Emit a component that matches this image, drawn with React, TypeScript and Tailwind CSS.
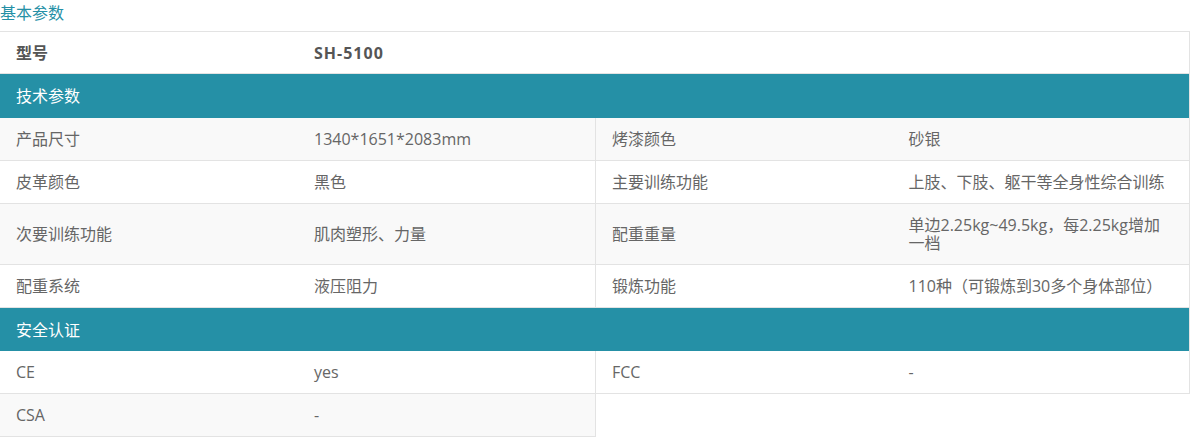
const font = { fontFamily: '"Open Sans", "Noto Sans CJK SC", sans-serif' };

type Pair = [string, React.ReactNode, string, React.ReactNode];

const tech: Pair[] = [
  ["产品尺寸", "1340*1651*2083mm", "烤漆颜色", "砂银"],
  ["皮革颜色", "黑色", "主要训练功能", "上肢、下肢、躯干等全身性综合训练"],
  [
    "次要训练功能",
    "肌肉塑形、力量",
    "配重重量",
    <>
      单边2.25kg~49.5kg，每2.25kg增加
      <br />
      一档
    </>,
  ],
  ["配重系统", "液压阻力", "锻炼功能", "110种（可锻炼到30多个身体部位）"],
];

function Section({ title, tall }: { title: string; tall?: boolean }) {
  return (
    <div className={`flex items-center bg-[#2590a6] px-4 text-white ${tall ? "h-[44px]" : "h-[43px]"}`}>
      {title}
    </div>
  );
}

function Row({ row, gray }: { row: Pair; gray: boolean }) {
  return (
    <div
      className={`grid grid-cols-[298px_298px_1fr_1fr] border-b border-[#e3e3e3] ${gray ? "bg-[#f9f9f9]" : "bg-white"}`}
    >
      <div className="flex items-center px-4 py-3">{row[0]}</div>
      <div className="flex items-center border-r border-[#e3e3e3] px-4 py-3">{row[1]}</div>
      <div className="flex items-center px-4 py-3">{row[2]}</div>
      <div className="flex items-center px-4 py-3">{row[3]}</div>
    </div>
  );
}

export default function App() {
  return (
    <div className="w-[1191px] bg-white text-[16px] leading-[18px] text-[#666]" style={font}>
      <div className="h-[31px] pt-[3px] leading-[20px] text-[#2590a6]">基本参数</div>
      <div className="w-[1190px] border-r border-[#e3e3e3]">
        <div className="grid h-[43px] grid-cols-[298px_1fr] items-center border-y border-[#e3e3e3] font-bold text-[#555]">
          <div className="px-4">型号</div>
          <div className="px-4 tracking-[1px]">SH-5100</div>
        </div>
        <Section title="技术参数" tall />
        {tech.map((r, i) => (
          <Row key={i} row={r} gray={i % 2 === 0} />
        ))}
        <Section title="安全认证" />
        <Row row={["CE", "yes", "FCC", "-"]} gray={false} />
      </div>
      <div className="flex w-[1190px]">
        <div className="grid w-[596px] grid-cols-[298px_1fr] border-r border-b border-[#e3e3e3] bg-[#f9f9f9]">
          <div className="px-4 py-3">CSA</div>
          <div className="px-4 py-3">-</div>
        </div>
      </div>
    </div>
  );
}
